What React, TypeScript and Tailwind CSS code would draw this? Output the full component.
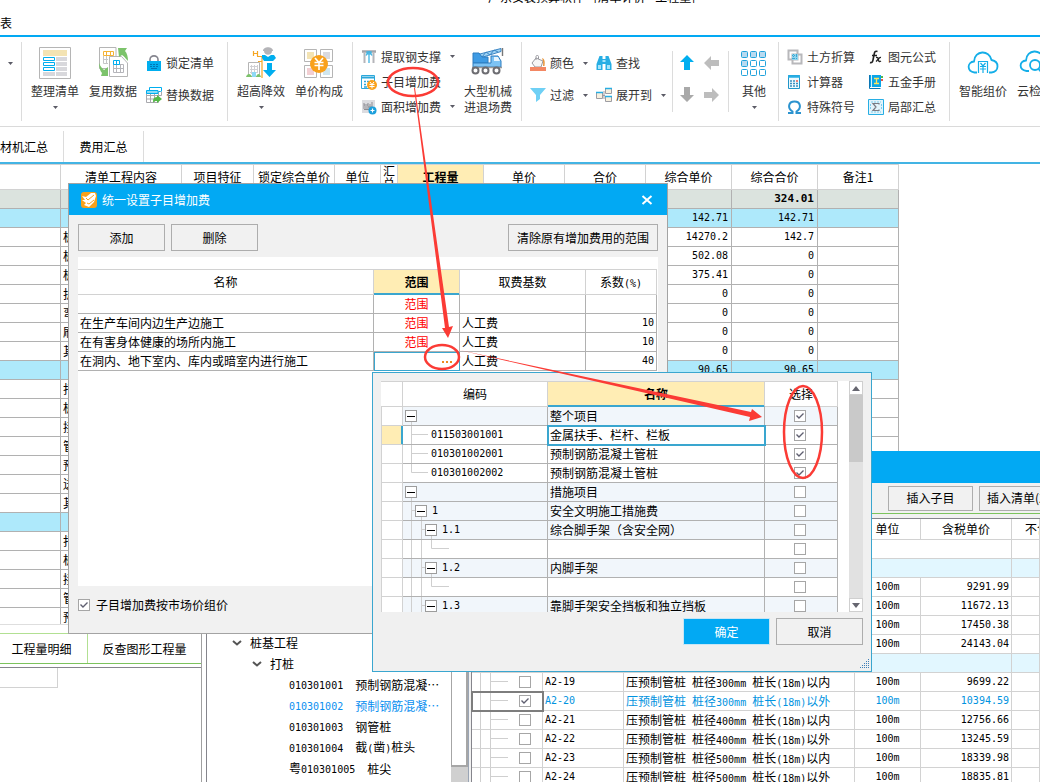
import { ReactNode, useState } from "react";
import { clsx } from "clsx";

const mono = "font-['DejaVu_Sans_Mono','Noto_Sans_CJK_SC',monospace] text-[10px]";

/* ---------- small shared pieces ---------- */

// half-width runs are set smaller, so they take half of a Chinese character
function Mixed({ text }: { text: string }) {
    return (
        <>
            {text.split(/([\x20-\x7e]+)/).map((part, i) =>
                i % 2 ? <span key={i} className={clsx(mono, "whitespace-pre")}>{part}</span> : part
            )}
        </>
    );
}

function Num({ children, className }: { children?: ReactNode; className?: string }) {
    return <div className={clsx(mono, "h-[18px] leading-[18px]", className)}>{children}</div>;
}

function Caret() {
    return (
        <svg width="5" height="3" viewBox="0 0 5 3" className="shrink-0">
            <path d="M0 0H5L2.5 3Z" fill="#5b5b66" />
        </svg>
    );
}

function Check({ id, label, checked = false }: { id?: string; label?: string; checked?: boolean }) {
    const [on, setOn] = useState(checked);
    return (
        <span className="inline-grid size-3 shrink-0 align-middle">
            <input
                id={id}
                type="checkbox"
                aria-label={label}
                checked={on}
                onChange={() => setOn(!on)}
                className="[grid-area:1/1] appearance-none size-3 border border-[#a6a6a6] bg-white"
            />
            {on && (
                <svg viewBox="0 0 12 12" className="[grid-area:1/1] size-3 pointer-events-none">
                    <path d="M2.5 5.5L5 8L9.5 3.5" fill="none" stroke="#5f5f70" strokeWidth="1.4" />
                </svg>
            )}
        </span>
    );
}

function Btn({ children, className }: { children: ReactNode; className?: string }) {
    return (
        <button className={clsx("h-[27px] border border-[#adadad] bg-[#f1f1f1] shrink-0 whitespace-nowrap", className)}>
            {children}
        </button>
    );
}

/* ---------- ribbon ---------- */

const blue = "#00aeef";

const icons: Record<string, ReactNode> = {
    arrange: (
        <svg width="32" height="32" viewBox="0 0 32 32" fill="none">
            <path d="M.5 .5H31.5V31.5H.5Z" stroke="#b5b5b5" fill="#fff" />
            <path d="M4 3H28V9H4Z" fill="#f3e3b3" />
            <path d="M17 10H28V14H17ZM17 15H28V19H17ZM17 20H28V24H17ZM17 25H28V29H17ZM4 25H16V29H4Z" fill="#d8d8dc" />
            <path d="M4.5 10.5H15.5V13.5H4.5ZM4.5 15.5H15.5V18.5H4.5ZM4.5 20.5H15.5V23.5H4.5Z" stroke={blue} />
        </svg>
    ),
    reuse: (
        <svg width="32" height="32" viewBox="0 0 32 32" fill="none">
            <path d="M19 .5H2.5V21.5H11M19 .5V9" stroke="#b5b5b5" />
            <path d="M6.5 4.5H16.5V8.5H6.5ZM9.5 4V9M13.5 4V9" stroke="#f5b335" />
            <path d="M6.5 9V16.5H11M6 12.5H11M9.5 9V17" stroke="#c5c5c8" />
            <path d="M24.5 9.5H12.5V29.5H30.5V16Z" stroke="#b5b5b5" fill="#fff" />
            <path d="M16.5 17.5H26.5V25.5H16.5ZM16 21.5H27M19.5 17V26M23.5 17V26" stroke="#b5b5ba" />
            <path d="M16.5 13.5H22.5V17.5H16.5ZM19.5 13V18" stroke={blue} />
            <path d="M21 1H30L28 4C30 6 31 10 31 14C28 11 27 9 25 8L22 10Z" fill="#7cc36b" />
            <path d="M2 16C3 19 5 21 7 23L11 20V29L4 29L5 26C3 24 2 20 2 16Z" fill="#7cc36b" />
        </svg>
    ),
    lock: (
        <svg width="16" height="16" viewBox="0 0 16 16" fill="none">
            <path d="M4 7V4.5A4 3.6 0 0 1 12 4.5V7" stroke="#85858f" strokeWidth="1.6" />
            <path d="M1 6H15V16H1Z" fill={blue} />
            <path d="M4 9.500H6M7 9.500H9M10 9.500H12M4 11.500H6M7 11.500H9M10 11.500H12M5 13.500H11" stroke="#0076b5" />
        </svg>
    ),
    replace: (
        <svg width="16" height="16" viewBox="0 0 16 16" fill="none">
            <path d="M3.5 .5H15.5V4.5H3.5Z" stroke={blue} fill="#fff" />
            <path d="M.5 4.5H12.5V15.5H.5ZM.5 8.5H15.5V4.5M.5 12H12M4.5 5V16M8.5 5V16" stroke="#a9a9ae" fill="#fff" />
            <path d="M.5 3.5H12V6.5H.5Z" fill="#8adcf8" stroke={blue} />
            <path d="M7 14C7 11 9 10 11 10V8L16 12L11 16V14C9 14 8 14 7 16Z" fill="#55b947" />
        </svg>
    ),
    height: (
        <svg width="32" height="32" viewBox="0 0 32 32" fill="none">
            <path d="M3.5 15.5H14.5V29.5H3.5Z" stroke="#b5b5b5" fill="#fff" />
            <path d="M6.5 18V27M9.5 18V25M12.5 18V25M5 19.5H13M5 22.5H13M5 25.5H13" stroke="#d0d0d4" />
            <path d="M1 30C2 26 6 26 7 30ZM11 30C12 26 15 26 16 30Z" fill="#7cc36b" />
            <path d="M7 25H11V30H7Z" fill="#8fd9f5" />
            <path d="M8.5 4V9M12.500 4V9M8.5 6.5H12.500M12 9.5H18M17 10V31M13 14.5H17" stroke="#f5a623" strokeWidth="1.2" />
            <path d="M18 4C18 -1 28 -1 28 4ZM19 4H27C27 9 19 9 19 4Z" fill="#b4b4b8" />
            <path d="M17 8H20L23 10L26 8H29L31 11L28 14H19L17 11Z" fill={blue} />
            <path d="M22 16H27V23H31L24.500 30L18 23H22Z" fill={blue} />
        </svg>
    ),
    price: (
        <svg width="32" height="32" viewBox="0 0 32 32" fill="none">
            <path d="M1.5 2.5H13.5V14.5H1.5ZM17.5 2.5H29.5V14.5H17.5ZM1.5 18.5H13.5V30.5H1.5ZM17.5 18.5H29.5V30.5H17.5Z" stroke="#b5b5b5" />
            <path d="M4 5H11V12H4Z" fill="#f3e3b3" />
            <path d="M20 5H27V12H20Z" fill="#dadade" />
            <path d="M4 21H11V28H4Z" fill="#f2cfd3" />
            <path d="M20 21H27V28H20Z" fill="#cfe6ef" />
            <circle cx="16" cy="17" r="9" fill="#f9a11b" />
            <path d="M12 11L16 15.5L20 11M11.5 15.5H20.5M11.5 18.5H20.5M16 15V23" stroke="#fff" strokeWidth="1.6" />
        </svg>
    ),
    steel: (
        <svg width="16" height="16" viewBox="0 0 16 16" fill="none">
            <path d="M1 2.5H15" stroke="#a5a5aa" strokeWidth="2.5" />
            <path d="M3.5 4V14M12.5 4V14" stroke="#b5b5ba" strokeWidth="2" />
            <path d="M8 2V14M5 6.5C6 4 10 4 11 6.5M6 5V3H10V5" stroke="#3fb3e3" strokeWidth="1.3" />
        </svg>
    ),
    sub: (
        <svg width="16" height="16" viewBox="0 0 16 16" fill="none">
            <path d="M.5 1.5H13.5V14.5H.5Z" stroke="#2ba7da" fill="#fff" />
            <path d="M1 3.5H13" stroke="#2ba7da" strokeWidth="2" />
            <path d="M3 7.5H5M6 7.5H8M9 7.5H11M3 10.5H5M3 13H6" stroke="#2ba7da" strokeWidth="1.5" />
            <circle cx="11" cy="11" r="5" fill="#f9a11b" />
            <path d="M9 8L11 10.5L13 8M8.5 10.5H13.5M8.5 12.5H13.5M11 10V14.5" stroke="#fff" />
        </svg>
    ),
    area: (
        <svg width="16" height="16" viewBox="0 0 16 16" fill="none">
            <path d="M1 1H14V14H1Z" fill="#dcdce0" />
            <path d="M3 4V10M5 7V11M7 4V11M9 5V9M11 3V9M3 6H7M7 8H11M3 10.5H9" stroke="#8d8d93" />
            <circle cx="11.5" cy="11.5" r="4" fill="#1b9fdc" />
            <path d="M9.5 11.5H13.5M11.5 9.5V13.5" stroke="#fff" strokeWidth="1.2" />
        </svg>
    ),
    crane: (
        <svg width="36" height="32" viewBox="0 0 36 32" fill="none">
            <path d="M6 8L31 1.5V4.500L13 10" stroke="#3b85c4" fill="#9fd4f5" />
            <path d="M12 10L16 5L20 8L24 3L28 5" stroke="#3b85c4" />
            <path d="M32.5 1V9" stroke="#777" strokeWidth="1.4" />
            <path d="M3 6H9L12 10H18V16H3Z" fill="#3e9be4" stroke="#2c7dc0" />
            <path d="M3 16H21V9H28L31 14V20H3Z" fill="#7cc3f5" stroke="#2c7dc0" />
            <path d="M24 10H28L30 14H24Z" fill="#e6f5ff" />
            <path d="M2 20.500H32" stroke="#999" strokeWidth="1.500" />
            <circle cx="5.500" cy="23.500" r="3" fill="#fff" stroke="#6d6d72" strokeWidth="2" />
            <circle cx="15.500" cy="23.500" r="3" fill="#fff" stroke="#6d6d72" strokeWidth="2" />
            <circle cx="26.500" cy="23.500" r="3" fill="#fff" stroke="#6d6d72" strokeWidth="2" />
        </svg>
    ),
    color: (
        <svg width="16" height="16" viewBox="0 0 16 16" fill="none">
            <path d="M6 3L13 6L11 12H5L2 8Z" stroke="#9a9aa0" fill="#f6f6f6" />
            <path d="M6 5V1.5C6 0 8.5 0 8.5 1.5V4" stroke="#9a9aa0" />
            <path d="M12 3C15 4 15 7 14.5 11H13C13.5 7 13 6 12 3Z" fill="#e8963c" />
            <path d="M0 12H16V16H0Z" fill="#f38763" />
        </svg>
    ),
    find: (
        <svg width="16" height="16" viewBox="0 0 16 16" fill="none">
            <path d="M3.5 1H6.5V4H9.5V1H12.5L15.5 9V15H9.5V9H6.5V15H.5V9Z" fill="#27aee4" />
            <path d="M2 10H5V14H2ZM11 10H14V14H11ZM6.5 5H9.5V7H6.5Z" fill="#a4e4fb" />
        </svg>
    ),
    filter: (
        <svg width="16" height="16" viewBox="0 0 16 16">
            <path d="M0 1H16L10 8V12L6 15V8Z" fill="#6fd0f5" />
        </svg>
    ),
    expand: (
        <svg width="16" height="16" viewBox="0 0 16 16" fill="none">
            <path d="M.5 5.5H6.5V11.5H.5ZM9.5 1.5H15.5V6.5H9.5ZM9.5 9.5H15.5V14.5H9.5Z" stroke="#9d9da3" fill="#f7f0df" />
            <path d="M0 5.5H7M9 1.5H16M9 9.5H16" stroke="#27aee4" strokeWidth="1.5" />
            <path d="M7 8.5H9M8 4V12" stroke="#9d9da3" />
        </svg>
    ),
    other: (
        <svg width="26" height="32" viewBox="0 0 26 32" fill="none" stroke="#21a3dc">
            {[0, 1, 2].map((r) =>
                [0, 1, 2].map((c) => (
                    <rect key={`${r}${c}`} x={0.5 + c * 9} y={4.5 + r * 9} width="6" height="6" rx="1" fill={r === 0 || (c === 0 && r < 2) ? "#b8daf0" : "#fff"} />
                ))
            )}
        </svg>
    ),
    earth: (
        <svg width="16" height="16" viewBox="0 0 16 16" fill="none">
            <path d="M1.5 1.5H10.500V10.500H1.500ZM5.500 5.500H14.500V14.500H5.500Z" stroke="#b8b8bb" strokeWidth="2" />
            <path d="M5 5H11V11H5Z" fill="#8fd4ee" />
            <path d="M5 6.5H11M5 9.5H11M6.5 5V11M9.5 5V11" stroke="#3fa7d0" strokeDasharray="1 1" />
        </svg>
    ),
    calc: (
        <svg width="16" height="16" viewBox="0 0 16 16" fill="none">
            <path d="M1.5 1.5H12.5V14.5H1.5Z" stroke="#2196c9" fill="#eef9fe" />
            <path d="M1 2.5H13" stroke="#27aee4" strokeWidth="2.5" />
            <path d="M3 7H8M3 9.5H11M3 12H11" stroke="#3b8fc0" strokeDasharray="2 1" strokeWidth="1.4" />
            <path d="M9 7H11" stroke="#e8574a" strokeWidth="1.5" />
        </svg>
    ),
    omega: (
        <svg width="16" height="16" viewBox="0 0 16 16" fill="none">
            <path d="M1 14H5.5V12.5C0 9 1.5 2.5 7.5 2.5S15 9 9.5 12.5V14H14" stroke="#2b93cf" strokeWidth="2" />
        </svg>
    ),
    fx: (
        <svg width="16" height="16" viewBox="0 0 16 16" fill="none" stroke="#222">
            <path d="M9.5 2.5C7 1.5 6.5 3 6 6L5 11C4.5 13.5 3.5 14 2 13.5M4 6.5H9" strokeWidth="1.6" />
            <path d="M8 8.5C10 8 10 9 10.5 11S11.5 13 13 12M13 8.5C11 8 10 11 8 12.5" strokeWidth="1.3" />
        </svg>
    ),
    book: (
        <svg width="16" height="16" viewBox="0 0 16 16" fill="none">
            <path d="M2 1H13V13H2Z" fill="#0ba5e8" />
            <path d="M3.500 1V13" stroke="#d6effa" />
            <path d="M1.500 1V14.500H12.500" stroke="#0b77b5" />
            <path d="M6 4.500H11M8.5 4.5V9.5M6 9.5H11" stroke="#ffe45c" strokeWidth="1.3" />
            <path d="M14 2V4" stroke="#55b947" strokeWidth="2" />
            <path d="M14 5V7" stroke="#e8574a" strokeWidth="2" />
        </svg>
    ),
    sum: (
        <svg width="16" height="16" viewBox="0 0 16 16" fill="none">
            <path d="M.5 .5H15.5V15.5H.5Z" stroke="#27aee4" fill="#e2f4fb" />
            <path d="M3 3H13M3 13H13M2.5 5V11M13.5 5V11" stroke="#7ecbea" strokeDasharray="2 1" />
            <path d="M11 5.5V4.5H5L8 8L5 11.5H11V10.5" stroke="#7b7b83" strokeWidth="1.2" />
        </svg>
    ),
    cloudPrice: (
        <svg width="32" height="32" viewBox="0 0 32 32" fill="none" stroke="#14aee8" strokeWidth="1.8">
            <path d="M10 25.500H7.500C-.5 24.500 0 15 7 14.500C7.500 3 22.500 2.500 24.500 13C33 14.500 32 25 24.500 25.500H22" />
            <path d="M11.500 26V14.500H20.500V26" strokeWidth="1.2" />
            <path d="M13.500 16L16 19L18.500 16M13 19.500H19M13 22H19M16 19V26" strokeWidth="1.2" />
        </svg>
    ),
    cloudCheck: (
        <svg width="32" height="32" viewBox="0 0 32 32" fill="none" stroke="#14aee8" strokeWidth="1.8">
            <path d="M10 24H7.5C-.5 23 0 14 7 13.5C7.5 2 22.5 1.5 24.5 12C33 13.5 32 23 26 24" />
            <circle cx="16" cy="18" r="5" />
            <path d="M19.5 22L23 26" />
        </svg>
    ),
};

function Big({ icon, label, second, caret }: { icon: string; label: string; second?: string; caret?: boolean }) {
    return (
        <button className="w-[58px] shrink-0 pt-[5px] flex flex-col items-center text-[#333] whitespace-nowrap">
            <span className="h-8 flex">{icons[icon]}</span>
            <span className="mt-1 leading-4">{label}</span>
            {second && <span className="leading-4">{second}</span>}
            {caret && <span className="mt-1 h-2 flex items-center"><Caret /></span>}
        </button>
    );
}

function Small({ icon, label, caret, rows = 3 }: { icon: string; label: string; caret?: boolean; rows?: number }) {
    return (
        <button className={clsx("flex items-center gap-1 text-[#333] whitespace-nowrap", rows === 2 ? "h-8" : "h-[25px]")}>
            <span className="w-4 flex">{icons[icon]}</span>
            {label}
            {caret && <span className="ml-auto"><Caret /></span>}
        </button>
    );
}

function Group({ className, children }: { className?: string; children?: ReactNode }) {
    return <div className={clsx("h-[79px] flex items-start shrink-0 border-r border-[#dcdcdc]", className)}>{children}</div>;
}

function Arrow({ d, fill, label }: { d: string; fill: string; label: string }) {
    return (
        <button aria-label={label} className="h-8 flex items-center justify-center">
            <svg width="16" height="16" viewBox="0 0 16 16"><path d={d} fill={fill} /></svg>
        </button>
    );
}

function Ribbon() {
    return (
        <div className="h-[90px] pt-[5px] flex items-start overflow-hidden border-b border-[#dadada]">
            <Group className="w-[22px] pl-2 pt-5"><Caret /></Group>
            <Group className="w-[206px] pl-1">
                <Big icon="arrange" label="整理清单" caret />
                <Big icon="reuse" label="复用数据" />
                <div className="pl-1 pt-[5px]">
                    <Small rows={2} icon="lock" label="锁定清单" />
                    <Small rows={2} icon="replace" label="替换数据" />
                </div>
            </Group>
            <Group className="w-[125px] pl-1">
                <Big icon="height" label="超高降效" caret />
                <Big icon="price" label="单价构成" />
            </Group>
            <Group className="w-[169px] pl-2">
                <div className="w-[94px] pt-0.5 flex flex-col items-stretch">
                    <Small icon="steel" label="提取钢支撑" caret />
                    <Small icon="sub" label="子目增加费" />
                    <Small icon="area" label="面积增加费" caret />
                </div>
                <div className="pl-1"><Big icon="crane" label="大型机械" second="进退场费" /></div>
            </Group>
            <div className="w-[150px] shrink-0 h-[79px] pl-2 pt-[5px] grid grid-cols-[58px_70px] gap-x-2 content-start">
                <Small rows={2} icon="color" label="颜色" caret />
                <Small rows={2} icon="find" label="查找" />
                <Small rows={2} icon="filter" label="过滤" caret />
                <Small rows={2} icon="expand" label="展开到" caret />
            </div>
            <div className="w-[57px] shrink-0 h-[61px] mt-[9px] border-x border-[#dcdcdc] pl-px">
                <div className="-mt-1 grid grid-cols-[25px_25px]">
                    <Arrow label="上移" fill={blue} d="M8 0L15 7H11V15H5V7H1Z" />
                    <Arrow label="左移" fill="#bdbdbd" d="M0 8L7 1V5H15V11H7V15Z" />
                    <Arrow label="下移" fill="#a9a9a9" d="M8 15L15 8H11V0H5V8H1Z" />
                    <Arrow label="右移" fill="#bdbdbd" d="M15 8L8 1V5H0V11H8V15Z" />
                </div>
            </div>
            <Group className="w-[50px]"><div className="-ml-1"><Big icon="other" label="其他" caret /></div></Group>
            <Group className="w-[171px] pl-2">
                <div className="pt-0.5 grid grid-cols-[81px_70px]">
                    <Small icon="earth" label="土方折算" />
                    <Small icon="fx" label="图元公式" />
                    <Small icon="calc" label="计算器" />
                    <Small icon="book" label="五金手册" />
                    <Small icon="omega" label="特殊符号" />
                    <Small icon="sum" label="局部汇总" />
                </div>
            </Group>
            <div className="flex shrink-0 pl-1">
                <Big icon="cloudPrice" label="智能组价" />
                <div className="-ml-1.5"><Big icon="cloudCheck" label="云检查" /></div>
            </div>
        </div>
    );
}

/* ---------- main price list ---------- */

type MainRow = { name?: string; price?: string; total?: string; kind?: "sum" | "section" };

const mainRows: MainRow[] = [
    { kind: "sum", total: "324.01" },
    { kind: "section", price: "142.71", total: "142.71" },
    { name: "桩", price: "14270.2", total: "142.7" },
    { name: "桩", price: "502.08", total: "0" },
    { name: "桩", price: "375.41", total: "0" },
    { name: "护", price: "0", total: "0" },
    { name: "弯", price: "0", total: "0" },
    { name: "刷", price: "0", total: "0" },
    { name: "其", price: "0", total: "0" },
    { kind: "section", price: "90.65", total: "90.65" },
    { name: "打" },
    { name: "桩" },
    { name: "接" },
    { name: "管" },
    { name: "预" },
    { name: "送" },
    { name: "其" },
    { kind: "section" },
    { name: "打" },
    { name: "桩" },
    { name: "接" },
    { name: "管" },
    { name: "预" },
];

const mainHeads = ["", "清单工程内容", "项目特征", "锁定综合单价", "单位", "汇总", "工程量", "单价", "合价", "综合单价", "综合合价", "备注1"];
const mainWidths = [61, 121, 72, 81, 46, 17, 86, 81, 81, 86, 86, 81];

function MainTable() {
    return (
        <div className="h-[461px] overflow-hidden border-b border-[#dedede]">
            <table className="w-[899px] table-fixed border-separate border-spacing-0">
                <colgroup>
                    {mainWidths.map((w, i) => <col key={i} style={{ width: w }} />)}
                </colgroup>
                <thead>
                    <tr>
                        {mainHeads.map((head, i) => (
                            <th
                                key={i}
                                className={clsx(
                                    "h-[26px] p-0 border-t border-b border-r border-[#d2d2d2]",
                                    head === "工程量" ? "bg-[#ffedb4] font-bold" : "font-normal",
                                    head === "汇总" ? "leading-3" : "whitespace-nowrap"
                                )}
                            >
                                {head}
                            </th>
                        ))}
                    </tr>
                </thead>
                <tbody>
                    {mainRows.map((row, i) => (
                        <tr
                            key={i}
                            className={clsx(
                                "[&>td]:h-[19px] [&>td]:p-0 [&>td]:border-b [&>td]:border-r [&>td]:border-[#b1b1b1]",
                                row.kind === "sum" && "bg-[#dbe3de] font-bold",
                                row.kind === "section" && "bg-[#aee9fb]"
                            )}
                        >
                            <td />
                            <td><div className="pl-0.5 leading-[18px]">{row.name}</div></td>
                            <td /><td /><td /><td /><td /><td /><td />
                            <td><Num className="pr-[3px] text-right">{row.price}</Num></td>
                            <td><Num className={clsx("pr-[3px] text-right", row.kind === "sum" && "text-[11px]!")}>{row.total}</Num></td>
                            <td />
                        </tr>
                    ))}
                </tbody>
            </table>
        </div>
    );
}

function DetailPanel() {
    return (
        <div className="mt-2 w-[202px] grow border-r border-r-[#a0a0a0] border-t border-t-[#b2e092]">
            <div className="h-[30px] flex border-b border-[#7cc35d]">
                <button className="w-[88px] pr-1 border-r border-[#b2e092]">工程量明细</button>
                <button className="grow">反查图形工程量</button>
            </div>
            <div className="mt-[3px] border-t border-[#85858c]">
                <div className="w-[58px] h-5 border-r border-b border-[#d2d2d2]" />
            </div>
        </div>
    );
}

/* ---------- query window ---------- */

const leaves = [
    { code: "010301001", name: "预制钢筋混凝…" },
    { code: "010301002", name: "预制钢筋混凝…", active: true },
    { code: "010301003", name: "钢管桩" },
    { code: "010301004", name: "截(凿)桩头" },
    { code: "粤010301005", name: "桩尖" },
];

function Branch({ label, className }: { label: string; className: string }) {
    return (
        <li className={clsx("h-[21px] flex items-center gap-2", className)}>
            <svg width="10" height="6" viewBox="0 0 10 6"><path d="M1 1L5 4.5L9 1" fill="none" stroke="#555" strokeWidth="2" /></svg>
            {label}
        </li>
    );
}

const quotas = [
    { unit: "100m", price: "9291.99" },
    { unit: "100m", price: "11672.13" },
    { unit: "100m", price: "17450.38" },
    { unit: "100m", price: "24143.04" },
    { section: true },
    { code: "A2-19", name: "压预制管桩 桩径300mm 桩长(18m)以内", unit: "100m", price: "9699.22" },
    { code: "A2-20", name: "压预制管桩 桩径300mm 桩长(18m)以外", unit: "100m", price: "10394.59", active: true },
    { code: "A2-21", name: "压预制管桩 桩径400mm 桩长(18m)以内", unit: "100m", price: "12756.66" },
    { code: "A2-22", name: "压预制管桩 桩径400mm 桩长(18m)以外", unit: "100m", price: "13245.59" },
    { code: "A2-23", name: "压预制管桩 桩径500mm 桩长(18m)以内", unit: "100m", price: "18339.98" },
    { code: "A2-24", name: "压预制管桩 桩径500mm 桩长(18m)以外", unit: "100m", price: "18835.81" },
];

function QuotaTable() {
    return (
        <table className="w-full table-fixed border-separate border-spacing-0">
            <colgroup>
                <col className="w-[71px]" />
                <col className="w-[81px]" />
                <col className="w-[231px]" />
                <col className="w-[66px]" />
                <col className="w-[91px]" />
                <col />
            </colgroup>
            <thead>
                <tr className="[&>th]:h-[21px] [&>th]:p-0 [&>th]:font-normal [&>th]:border-b [&>th]:border-r [&>th]:border-[#d2d2d2]">
                    <th /><th /><th /><th>单位</th><th>含税单价</th>
                    <th className="pl-[13px]! text-left whitespace-nowrap overflow-hidden">不含税单价</th>
                </tr>
            </thead>
            <tbody className="[&_td]:h-[19px] [&_td]:p-0 [&_td]:border-b [&_td]:border-r [&_td]:border-[#d2d2d2] [&_td]:leading-[18px]">
                <tr><td colSpan={5} /><td /></tr>
                <tr className="bg-[#e2f7ff]"><td colSpan={5} /><td /></tr>
                {quotas.map((q, i) =>
                    q.section ? (
                        <tr key={i} className="bg-[#e2f7ff]"><td colSpan={5} /><td /></tr>
                    ) : (
                        <tr key={i} className={clsx("whitespace-nowrap", q.active && "text-[#0093e0]")}>
                            <td className={clsx(q.active && "outline-2 -outline-offset-1 outline-[#7d7d7d]")}>
                                <div className="h-[18px] flex items-center">
                                    <svg width="47" height="18" viewBox="0 0 47 18">
                                        <path d="M8.5 0V18M18.5 0V18M18.5 8.5H36" stroke="#cfcfcf" fill="none" />
                                    </svg>
                                    <Check label={q.code ?? "选择"} checked={q.active} />
                                </div>
                            </td>
                            <td><Num className="pl-0.5">{q.code}</Num></td>
                            <td><div className="pl-0.5 h-[18px]"><Mixed text={q.name ?? ""} /></div></td>
                            <td><Num className="text-center">{q.unit}</Num></td>
                            <td><Num className="pr-0.5 text-right">{q.price}</Num></td>
                            <td />
                        </tr>
                    )
                )}
            </tbody>
        </table>
    );
}

function QueryWindow() {
    return (
        <section className="absolute left-[206px] right-0 top-[451px] bottom-0 overflow-hidden flex flex-col bg-[#f1f1f1] border-l border-[#85858c]">
            <div className="h-8 shrink-0 bg-[#02a9f3]" />
            <div className="h-[31px] shrink-0 flex items-center gap-1.5 border-b border-[#7cc35d]">
                <div className="w-[675px] shrink-0" />
                <Btn className="w-[85px] h-[25px]!">插入子目</Btn>
                <Btn className="w-[85px] h-[25px]! px-[7px] text-left">插入清单(Z)</Btn>
            </div>
            <div className="mt-1 grow min-h-0 flex border-t border-[#85858c]">
                <ul className="w-[244px] shrink-0 pt-[113px] bg-white whitespace-nowrap">
                    <Branch label="桩基工程" className="pl-[25px]" />
                    <Branch label="打桩" className="pl-[45px]" />
                    {leaves.map((leaf) => (
                        <li key={leaf.code} className={clsx("h-[21px] pl-[82px] flex items-center gap-3", leaf.active && "text-[#0a8ff0]")}>
                            <span><Mixed text={leaf.code} /></span>
                            <span><Mixed text={leaf.name} /></span>
                        </li>
                    ))}
                </ul>
                <div className="w-[17px] shrink-0 bg-[#d0d0d0]">
                    <div className="h-[248px] bg-white border border-b-2 border-r-2 border-[#a6a6a6]" />
                </div>
                <div className="w-1 shrink-0 border-l border-r border-l-[#9aa5b5] border-r-[#85858c]" />
                <div className="grow min-w-0 bg-white"><QuotaTable /></div>
            </div>
        </section>
    );
}

/* ---------- surcharge dialog ---------- */

const fees = [
    { name: "", base: "", rate: "" },
    { name: "在生产车间内边生产边施工", base: "人工费", rate: "10" },
    { name: "在有害身体健康的场所内施工", base: "人工费", rate: "10" },
    { name: "在洞内、地下室内、库内或暗室内进行施工", base: "人工费", rate: "40", editing: true },
];

function FeeDialog() {
    return (
        <section className="absolute left-[68px] top-[183px] w-[600px] h-[451px] border border-[#a3a3a3] bg-[#f1f1f1]">
            <div className="h-[31px] pl-3 pr-[14px] flex items-center gap-[5px] bg-[#02a9f3] text-white">
                <svg width="16" height="16" viewBox="0 0 16 16">
                    <rect width="16" height="16" rx="3" fill="#f9a11b" />
                    <path d="M1 4L5 5L10 1L14 1L15 4L13 10L8 15L3 13L5 11L1 8L4 8Z" fill="#fff" />
                    <path d="M5 6L7 8L13 3M6 11L8 12L13 8" fill="none" stroke="#f9a11b" />
                </svg>
                <h2>统一设置子目增加费</h2>
                <button aria-label="关闭" className="ml-auto">
                    <svg width="12" height="10" viewBox="0 0 12 10"><path d="M1.5 1L10.5 9M10.5 1L1.5 9" stroke="#fff" strokeWidth="2" /></svg>
                </button>
            </div>
            <div className="px-[9px] pt-[9px]">
                <div className="flex gap-1.5">
                    <Btn className="w-[87px]">添加</Btn>
                    <Btn className="w-[87px]">删除</Btn>
                    <Btn className="w-[150px] ml-auto">清除原有增加费用的范围</Btn>
                </div>
                <div className="mt-1.5 h-[329px] pt-3 bg-white">
                    <table className="w-[579px] table-fixed border-separate border-spacing-0">
                        <colgroup>
                            <col className="w-[296px]" />
                            <col className="w-[86px]" />
                            <col className="w-[126px]" />
                            <col className="w-[71px]" />
                        </colgroup>
                        <thead>
                            <tr className="[&>th]:h-[26px] [&>th]:p-0 [&>th]:border-t [&>th]:border-b [&>th]:border-r [&>th]:border-[#d2d2d2]">
                                <th className="font-normal">名称</th>
                                <th className="bg-[#ffedb4] font-bold shadow-[inset_0_-1px_0_#3aa6cf] border-b-[#3aa6cf]!">范围</th>
                                <th className="font-normal">取费基数</th>
                                <th className="font-normal">系数<span className={mono}>(%)</span></th>
                            </tr>
                        </thead>
                        <tbody className="[&_td]:h-[19px] [&_td]:p-0 [&_td]:border-b [&_td]:border-r [&_td]:border-[#b1b1b1] [&_td]:leading-[18px]">
                            {fees.map((fee, i) => (
                                <tr key={i}>
                                    <td><div className="pl-0.5">{fee.name}</div></td>
                                    {fee.editing ? (
                                        <td className="outline outline-[#3aa6cf] -outline-offset-1">
                                            <button aria-label="选择范围" className="ml-auto mr-1 w-4 h-[18px] flex items-center justify-center">
                                                <svg width="12" height="12" viewBox="0 0 12 12"><path d="M1 6H3V8H1ZM5 6H7V8H5ZM9 6H11V8H9Z" fill="#f08a1d" /></svg>
                                            </button>
                                        </td>
                                    ) : (
                                        <td className="text-center text-[#ff0000]">范围</td>
                                    )}
                                    <td><div className="pl-0.5">{fee.base}</div></td>
                                    <td><Num className="pr-0.5 text-right">{fee.rate}</Num></td>
                                </tr>
                            ))}
                        </tbody>
                    </table>
                </div>
                <div className="mt-[11px] flex items-center gap-1.5">
                    <Check id="market" checked />
                    <label htmlFor="market">子目增加费按市场价组价</label>
                </div>
            </div>
        </section>
    );
}

/* ---------- scope picker ---------- */

const guides = {
    root: "M8.5 9V19",
    leaf: "M8.5 0V19M8.5 8.5H25",
    lastLeaf: "M8.5 0V8.5H25",
    level1: "M8.5 0V19M8.5 8.5H12M18.5 9V19",
    level2: "M8.5 0V19M18.5 0V19M18.5 8.5H22M28.5 9V19",
    empty: "M8.5 0V19M18.5 0V19M28.5 0V8.5H46",
};

const indents = { root: "pl-0.5", leaf: "pl-7", lastLeaf: "pl-7", level1: "pl-3", level2: "pl-[22px]", empty: "pl-12" };

type Scope = { kind: keyof typeof guides; code?: string; name?: string; on?: boolean; current?: boolean };

const scopes: Scope[] = [
    { kind: "root", name: "整个项目", on: true },
    { kind: "leaf", code: "011503001001", name: "金属扶手、栏杆、栏板", on: true, current: true },
    { kind: "leaf", code: "010301002001", name: "预制钢筋混凝土管桩", on: true },
    { kind: "lastLeaf", code: "010301002002", name: "预制钢筋混凝土管桩", on: true },
    { kind: "root", name: "措施项目" },
    { kind: "level1", code: "1", name: "安全文明施工措施费" },
    { kind: "level2", code: "1.1", name: "综合脚手架（含安全网）" },
    { kind: "empty" },
    { kind: "level2", code: "1.2", name: "内脚手架" },
    { kind: "empty" },
    { kind: "level2", code: "1.3", name: "靠脚手架安全挡板和独立挡板" },
];

function ScopeRow({ row }: { row: Scope }) {
    const folder = row.kind === "root" || row.kind === "level1" || row.kind === "level2";
    const bg = folder ? "bg-[#f1f6fb]" : "bg-white";
    return (
        <tr className="whitespace-nowrap">
            <td className={clsx("border-l border-[#d2d2d2]!", row.current && "bg-[#ffedb4] shadow-[inset_-1px_0_0_#3aa6cf] border-r-[#3aa6cf]!")} />
            <td className={bg}>
                <div className="h-[18px] grid items-center">
                    <svg width="60" height="18" viewBox="0 0 60 18" className="[grid-area:1/1]">
                        <path d={guides[row.kind]} stroke="#cfcfcf" fill="none" />
                    </svg>
                    <div className={clsx("[grid-area:1/1] flex items-center gap-[5px]", indents[row.kind])}>
                        {folder && (
                            <button aria-label="折叠" className="size-3 grid place-items-center border border-[#9c9c9c] bg-white">
                                <span className="w-2 h-px bg-black" />
                            </button>
                        )}
                        <span className={mono}>{row.code}</span>
                    </div>
                </div>
            </td>
            <td className={clsx(bg, row.current && "outline-2 -outline-offset-1 outline-[#3aa6cf]")}>
                <div className="pl-0.5 h-[18px]">{row.name}</div>
            </td>
            <td className={bg}>
                <div className="h-[18px] flex items-center justify-center pr-0.5"><Check label={row.name ?? "选择"} checked={row.on} /></div>
            </td>
        </tr>
    );
}

function ScopeDialog() {
    return (
        <section className="absolute left-[372px] top-[372px] w-[500px] h-[300px] p-2 border border-[#3aa6cf] bg-[#f0f0f0] flex flex-col">
            <div className="h-[231px] flex justify-between bg-white overflow-hidden">
                <table className="w-[457px] table-fixed border-separate border-spacing-0 self-start">
                    <colgroup>
                        <col className="w-[22px]" />
                        <col className="w-[145px]" />
                        <col className="w-[217px]" />
                        <col className="w-[73px]" />
                    </colgroup>
                    <thead>
                        <tr className="[&>th]:h-[26px] [&>th]:p-0 [&>th]:border-t [&>th]:border-b [&>th]:border-r [&>th]:border-[#d2d2d2]">
                            <th />
                            <th className="font-normal">编码</th>
                            <th className="bg-[#ffedb4] font-bold shadow-[inset_0_-1px_0_#3aa6cf] border-b-[#3aa6cf]!">名称</th>
                            <th className="font-normal">选择</th>
                        </tr>
                    </thead>
                    <tbody className="[&_td]:h-[19px] [&_td]:p-0 [&_td]:border-b [&_td]:border-r [&_td]:border-[#b1b1b1] [&_td]:leading-[18px]">
                        {scopes.map((row, i) => <ScopeRow key={i} row={row} />)}
                    </tbody>
                </table>
                <div className="w-3.5 flex flex-col bg-[#e1e1e1]">
                    <button aria-label="向上" className="h-3.5 grid place-items-center border border-[#cfcfcf] bg-white">
                        <svg width="8" height="5" viewBox="0 0 8 5"><path d="M0 5L4 0L8 5Z" fill="#666670" /></svg>
                    </button>
                    <div className="h-[67px] bg-[#c9c9c9]" />
                    <button aria-label="向下" className="mt-auto h-3.5 grid place-items-center border border-[#cfcfcf] bg-white">
                        <svg width="8" height="5" viewBox="0 0 8 5"><path d="M0 0L4 5L8 0Z" fill="#666670" /></svg>
                    </button>
                </div>
            </div>
            <div className="mt-1.5 flex justify-end gap-1.5">
                <Btn className="w-[87px] bg-[#02a9f3]! border-[#c8e6f5]! text-white">确定</Btn>
                <Btn className="w-[87px]">取消</Btn>
            </div>
            <svg width="10" height="10" viewBox="0 0 10 10" className="mt-auto -mr-1.5 -mb-1.5 self-end">
                <path d="M9.5 0V10M7.5 2V10M5.5 4V10M3.5 6V10M1.5 8V10" stroke="#3f7fb8" strokeDasharray="1 1" />
            </svg>
        </section>
    );
}

/* ---------- red guide marks over the windows ---------- */

function Marks() {
    return (
        <svg width="1040" height="782" viewBox="0 0 1040 782" className="absolute left-0 top-0 pointer-events-none" fill="none">
            <g stroke="#fb3b35" strokeWidth="2.5">
                <ellipse cx="413" cy="82" rx="25" ry="14" />
                <ellipse cx="442" cy="357" rx="17" ry="12" />
                <ellipse cx="803" cy="432" rx="19" ry="46" />
            </g>
            <path d="M414 88L415 88L449 327L453 326L448 338L442 328L445 328Z" fill="#fb3b35" />
            <path d="M459 350L751 412L752 409L762 417L749 421L750 417Z" fill="#fb3b35" />
        </svg>
    );
}

export default function App() {
    return (
        <main className="relative min-h-screen overflow-hidden flex flex-col bg-white text-black text-xs font-['Noto_Sans_CJK_SC','Liberation_Sans',sans-serif]">
            <header className="h-[35px] shrink-0">
                <div className="h-[3px] pl-[488px] overflow-hidden flex items-end whitespace-nowrap leading-3">
                    广东安装预算软件 - [清单计价 - 工程量]
                </div>
                <nav className="pt-3 flex">
                    <button className="h-4">表</button>
                </nav>
            </header>
            <div className="border-t-2 border-[#02a9f3]"><Ribbon /></div>
            <nav className="h-[37px] pt-1 flex border-b-2 border-[#43b4e4]">
                <button className="w-16 pr-4 border-r border-[#dcdcdc] whitespace-nowrap">材机汇总</button>
                <button className="w-20 border-r border-[#dcdcdc] whitespace-nowrap">费用汇总</button>
            </nav>
            <MainTable />
            <DetailPanel />
            <QueryWindow />
            <FeeDialog />
            <ScopeDialog />
            <Marks />
        </main>
    );
}
